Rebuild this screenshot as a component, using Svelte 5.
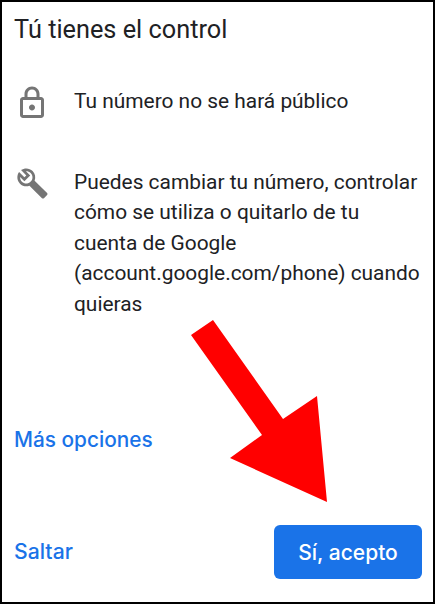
<script>
	let items = [
		{ icon: "lock", text: "Tu número no se hará público" },
		{
			icon: "build",
			text: "Puedes cambiar tu número, controlar cómo se utiliza o quitarlo de tu cuenta de Google (account.google.com/phone) cuando quieras",
		},
	];
</script>

<main>
	<h1>Tú tienes el control</h1>

	<ul>
		{#each items as item}
			<li>
				<span class="slot">
					{#if item.icon == "lock"}
						<svg class="lock" viewBox="0 0 24 24">
							<path d="M18 8h-1V6c0-2.76-2.24-5-5-5S7 3.24 7 6v2H6c-1.1 0-2 .9-2 2v10c0 1.1.9 2 2 2h12c1.1 0 2-.9 2-2V10c0-1.1-.9-2-2-2zM9 6c0-1.66 1.34-3 3-3s3 1.34 3 3v2H9V6zm9 14H6V10h12v10zm-6-3c1.1 0 2-.9 2-2s-.9-2-2-2-2 .9-2 2 .9 2 2 2z" />
						</svg>
					{:else}
						<svg class="build" viewBox="0 0 24 24">
							<path fill-rule="evenodd" d="M22.61 18.99l-9.08-9.08c.93-2.34.45-5.1-1.44-7C9.79.61 6.21.4 3.66 2.26L7.5 6.11 6.08 7.52 2.25 3.69C.39 6.23.6 9.82 2.9 12.11c1.86 1.86 4.57 2.35 6.89 1.48l9.11 9.11c.39.39 1.02.39 1.41 0l2.3-2.3c.4-.38.4-1.01 0-1.41zM10.15 11.13c-.61.45-1.29.72-2 .82-1.36.2-2.79-.21-3.83-1.25C3.37 9.76 2.93 8.5 3 7.26l3.09 3.09 4.24-4.24-3.09-3.09c1.24-.07 2.49.37 3.44 1.31 1.08 1.08 1.49 2.57 1.24 3.96-.12.71-.42 1.37-.88 1.96z" />
						</svg>
					{/if}
				</span>
				<p>{item.text}</p>
			</li>
		{/each}
	</ul>

	<a class="more" href="#more">Más opciones</a>

	<footer>
		<a class="skip" href="#skip">Saltar</a>
		<button type="button">Sí, acepto</button>
	</footer>

	<svg class="arrow" viewBox="0 0 436 604">
		<polygon points="191,335 213,320 283,419 317,396 327,502 230,458 262,435" />
	</svg>
</main>

<style>
	:global(body) {
		margin: 0;
		background: #fff;
	}
	main {
		position: relative;
		box-sizing: border-box;
		display: flex;
		flex-direction: column;
		width: 435px;
		height: 604px;
		border: 2px solid #000;
		padding: 13px 11px 23px 12px;
		font-family: Roboto, "Liberation Sans", sans-serif;
		color: #202124;
	}
	h1 {
		margin: 0;
		font-size: 25.3px;
		font-weight: 400;
		line-height: 30px;
	}
	ul {
		list-style: none;
		margin: 39.5px 0 0;
		padding: 0;
	}
	li {
		display: flex;
		align-items: flex-start;
		gap: 24px;
	}
	li + li {
		margin-top: 45px;
	}
	.slot {
		flex: none;
		width: 36px;
		height: 36px;
	}
	svg {
		display: block;
		fill: #757575;
	}
	.lock {
		width: 36px;
		height: 36px;
	}
	.build {
		width: 33px;
		height: 33px;
		margin: 1.3px 0 0 2px;
	}
	p {
		margin: 1.5px 0 0;
		font-size: 20.9px;
		line-height: 30.4px;
	}
	a {
		color: #1a73e8;
		text-decoration: none;
		font-family: Inter, Roboto, sans-serif;
		font-weight: 500;
	}
	.more {
		align-self: flex-start;
		margin-top: 106px;
		font-size: 20.8px;
		line-height: 30px;
	}
	.skip {
		font-size: 21.2px;
		margin-bottom: 2px;
	}
	footer {
		margin-top: auto;
		display: flex;
		align-items: center;
		justify-content: space-between;
	}
	button {
		width: 148px;
		height: 54px;
		border: 0;
		border-radius: 6px;
		background: #1a73e8;
		color: #fff;
		font-family: Inter, Roboto, sans-serif;
		font-weight: 500;
		font-size: 21px;
	}
	.arrow {
		position: absolute;
		left: -2px;
		top: -2px;
		width: 436px;
		height: 604px;
		pointer-events: none;
	}
	.arrow polygon {
		fill: #f00;
	}
</style>
